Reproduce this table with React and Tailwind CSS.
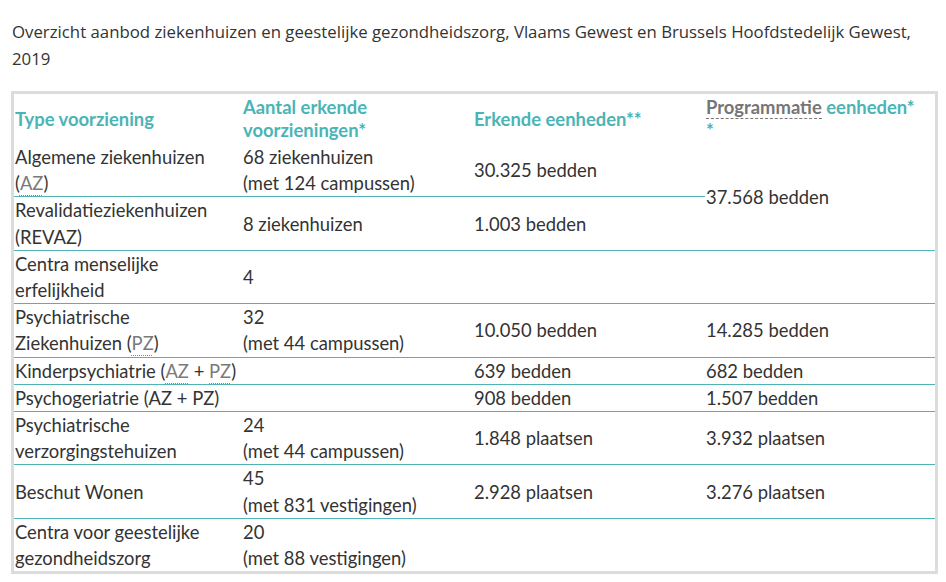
import React from "react";

const Abbr = ({ children }) => (
  <span className="text-[#7a7a7a] underline decoration-dotted decoration-[#888] decoration-1 underline-offset-[5px]">
    {children}
  </span>
);

const td = "align-middle pl-px pr-2 border-b border-[#4fb3b8]";
const tdLast = "align-middle pl-px pr-2";

export default function App() {
  return (
    <div className="w-[946px] h-[582px] bg-white overflow-hidden font-['Lato',sans-serif] text-[#333]">
      <p className="pl-[12px] pt-[18px] pr-[30px] font-['Open_Sans',sans-serif] text-[16.8px] leading-[27px] text-[#333]">
        Overzicht aanbod ziekenhuizen en geestelijke gezondheidszorg, Vlaams Gewest en Brussels Hoofdstedelijk Gewest, 2019
      </p>
      <div className="ml-[11px] mt-[19px] w-[927px] border-[3px] border-[#dcdcdc]">
        <table className="w-full table-fixed border-collapse text-[18.4px] leading-[26.2px]">
          <colgroup>
            <col className="w-[228px]" />
            <col className="w-[231px]" />
            <col className="w-[232px]" />
            <col />
          </colgroup>
          <thead>
            <tr className="h-[50px] text-left font-bold text-[#4ab4b6] leading-[23px]">
              <th className="align-middle pl-px font-bold">Type voorziening</th>
              <th className="align-middle pl-px pr-4 font-bold">Aantal erkende voorzieningen*</th>
              <th className="align-middle pl-px font-bold">Erkende eenheden**</th>
              <th className="align-middle pl-px pr-[16px] font-bold">
                <span className="text-[#767676] border-b border-dashed border-[#777]">Programmatie</span> eenheden*<wbr />*
              </th>
            </tr>
          </thead>
          <tbody>
            <tr>
              <td className={td}>Algemene ziekenhuizen (<Abbr>AZ</Abbr>)</td>
              <td className={td}>68 ziekenhuizen<br />(met 124 campussen)</td>
              <td className={td}>30.325 bedden</td>
              <td rowSpan={2} className={td}>37.568 bedden</td>
            </tr>
            <tr>
              <td className={td}>Revalidatieziekenhuizen (REVAZ)</td>
              <td className={td}>8 ziekenhuizen</td>
              <td className={td}>1.003 bedden</td>
            </tr>
            <tr>
              <td className={td}>Centra menselijke erfelijkheid</td>
              <td className={td}>4</td>
              <td className={td}></td>
              <td className={td}></td>
            </tr>
            <tr>
              <td className={td}>Psychiatrische Ziekenhuizen (<Abbr>PZ</Abbr>)</td>
              <td className={td}>32<br />(met 44 campussen)</td>
              <td className={td}>10.050 bedden</td>
              <td className={td}>14.285 bedden</td>
            </tr>
            <tr>
              <td colSpan={2} className={td}>Kinderpsychiatrie (<Abbr>AZ</Abbr> + <Abbr>PZ</Abbr>)</td>
              <td className={td}>639 bedden</td>
              <td className={td}>682 bedden</td>
            </tr>
            <tr>
              <td colSpan={2} className={td}>Psychogeriatrie (AZ + PZ)</td>
              <td className={td}>908 bedden</td>
              <td className={td}>1.507 bedden</td>
            </tr>
            <tr>
              <td className={td}>Psychiatrische verzorgingstehuizen</td>
              <td className={td}>24<br />(met 44 campussen)</td>
              <td className={td}>1.848 plaatsen</td>
              <td className={td}>3.932 plaatsen</td>
            </tr>
            <tr>
              <td className={td}>Beschut Wonen</td>
              <td className={td}>45<br />(met 831 vestigingen)</td>
              <td className={td}>2.928 plaatsen</td>
              <td className={td}>3.276 plaatsen</td>
            </tr>
            <tr>
              <td className={tdLast}>Centra voor geestelijke gezondheidszorg</td>
              <td className={tdLast}>20<br />(met 88 vestigingen)</td>
              <td className={tdLast}></td>
              <td className={tdLast}></td>
            </tr>
          </tbody>
        </table>
      </div>
    </div>
  );
}
